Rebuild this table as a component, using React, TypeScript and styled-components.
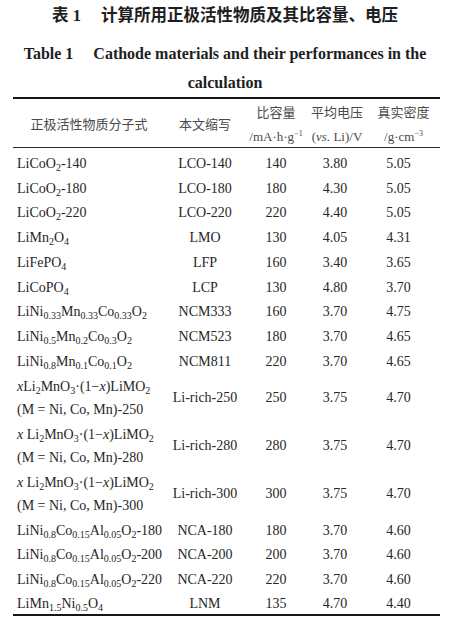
import React from 'react';
import styled, { createGlobalStyle } from 'styled-components';

const GlobalStyle = createGlobalStyle`
  body {
    margin: 0;
    background: #fff;
  }
`;

const Page = styled.div`
  width: 450px;
  color: #262626;
  font-family: "Liberation Serif", "Times New Roman", serif;
`;

const CnTitle = styled.h1`
  margin: 0;
  height: 30px;
  line-height: 31px;
  text-align: center;
  font-family: "Liberation Serif", "Noto Sans CJK SC", sans-serif;
  font-size: 16.5px;
  font-weight: bold;
  color: #1e1e1e;
  white-space: nowrap;
`;

const TitleLabel = styled.span`
  margin-right: 20px;
`;

const EnTitle = styled.h2`
  margin: 8.5px 0 0;
  text-align: center;
  font-size: 16px;
  font-weight: bold;
  line-height: 29px;
  color: #1e1e1e;
`;

const EnLine = styled.div`
  white-space: nowrap;
`;

const Table = styled.div`
  width: 427px;
  margin-left: 13px;
  border-top: 2px solid #151515;
  border-bottom: 2px solid #151515;
`;

const columns = '152px 80px 62px 60px 73px';

const HeadRow = styled.div`
  display: grid;
  grid-template-columns: ${columns};
  align-items: center;
  height: 46px;
  padding-top: 2px;
  border-bottom: 1px solid #2a2a2a;
`;

const HeadCell = styled.div`
  text-align: center;
  font-family: "Liberation Serif", "Noto Sans CJK SC", serif;
  font-size: 13px;
  line-height: 24.5px;
  color: #4a4a4a;
  white-space: nowrap;
`;

const Body = styled.div`
  padding-top: 3.6px;
`;

const Row = styled.div<{ $height: number }>`
  display: grid;
  grid-template-columns: ${columns};
  align-items: center;
  height: ${p => p.$height}px;
`;

const Cell = styled.div<{ $align?: 'left' | 'center'; $padRight?: number }>`
  text-align: ${p => p.$align || 'center'};
  padding-left: ${p => (p.$align === 'left' ? 4 : 0)}px;
  padding-right: ${p => p.$padRight || 0}px;
  font-size: 14px;
  line-height: 23px;
  white-space: nowrap;
`;

const Sub = styled.sub`
  font-size: 10px;
  vertical-align: -3px;
  line-height: 0;
`;

const Sup = styled.sup`
  font-size: 8px;
  vertical-align: 5px;
  line-height: 0;
`;

const Var = styled.i``;

const liRich = (n: number, spaced: boolean) => (
  <>
    <div>
      <Var>x</Var>{spaced ? ' ' : ''}Li<Sub>2</Sub>MnO<Sub>3</Sub>·(1−<Var>x</Var>)LiMO<Sub>2</Sub>
    </div>
    <div>(M = Ni, Co, Mn)-{n}</div>
  </>
);

const nca = (n: number) => (
  <>
    LiNi<Sub>0.8</Sub>Co<Sub>0.15</Sub>Al<Sub>0.05</Sub>O<Sub>2</Sub>-{n}
  </>
);

interface Material {
  formula: React.ReactNode;
  abbr: string;
  capacity: string;
  voltage: string;
  density: string;
  height?: number;
}

const materials: Material[] = [
  { formula: <>LiCoO<Sub>2</Sub>-140</>, abbr: 'LCO-140', capacity: '140', voltage: '3.80', density: '5.05' },
  { formula: <>LiCoO<Sub>2</Sub>-180</>, abbr: 'LCO-180', capacity: '180', voltage: '4.30', density: '5.05' },
  { formula: <>LiCoO<Sub>2</Sub>-220</>, abbr: 'LCO-220', capacity: '220', voltage: '4.40', density: '5.05' },
  { formula: <>LiMn<Sub>2</Sub>O<Sub>4</Sub></>, abbr: 'LMO', capacity: '130', voltage: '4.05', density: '4.31' },
  { formula: <>LiFePO<Sub>4</Sub></>, abbr: 'LFP', capacity: '160', voltage: '3.40', density: '3.65' },
  { formula: <>LiCoPO<Sub>4</Sub></>, abbr: 'LCP', capacity: '130', voltage: '4.80', density: '3.70' },
  {
    formula: <>LiNi<Sub>0.33</Sub>Mn<Sub>0.33</Sub>Co<Sub>0.33</Sub>O<Sub>2</Sub></>,
    abbr: 'NCM333', capacity: '160', voltage: '3.70', density: '4.75',
  },
  {
    formula: <>LiNi<Sub>0.5</Sub>Mn<Sub>0.2</Sub>Co<Sub>0.3</Sub>O<Sub>2</Sub></>,
    abbr: 'NCM523', capacity: '180', voltage: '3.70', density: '4.65',
  },
  {
    formula: <>LiNi<Sub>0.8</Sub>Mn<Sub>0.1</Sub>Co<Sub>0.1</Sub>O<Sub>2</Sub></>,
    abbr: 'NCM811', capacity: '220', voltage: '3.70', density: '4.65',
  },
  { formula: liRich(250, false), abbr: 'Li-rich-250', capacity: '250', voltage: '3.75', density: '4.70', height: 48 },
  { formula: liRich(280, true), abbr: 'Li-rich-280', capacity: '280', voltage: '3.75', density: '4.70', height: 48 },
  { formula: liRich(300, true), abbr: 'Li-rich-300', capacity: '300', voltage: '3.75', density: '4.70', height: 48 },
  { formula: nca(180), abbr: 'NCA-180', capacity: '180', voltage: '3.70', density: '4.60' },
  { formula: nca(200), abbr: 'NCA-200', capacity: '200', voltage: '3.70', density: '4.60' },
  { formula: nca(220), abbr: 'NCA-220', capacity: '220', voltage: '3.70', density: '4.60' },
  { formula: <>LiMn<Sub>1.5</Sub>Ni<Sub>0.5</Sub>O<Sub>4</Sub></>, abbr: 'LNM', capacity: '135', voltage: '4.70', density: '4.40', height: 22 },
];

const App: React.FC = () => {
  return (
    <Page>
      <GlobalStyle />
      <CnTitle>
        <TitleLabel>表 1</TitleLabel>计算所用正极活性物质及其比容量、电压
      </CnTitle>
      <EnTitle>
        <EnLine>
          <TitleLabel>Table 1</TitleLabel>Cathode materials and their performances in the
        </EnLine>
        <EnLine>calculation</EnLine>
      </EnTitle>
      <Table>
        <HeadRow>
          <HeadCell>正极活性物质分子式</HeadCell>
          <HeadCell>本文缩写</HeadCell>
          <HeadCell>
            <div>比容量</div>
            <div>/mA·h·g<Sup>−1</Sup></div>
          </HeadCell>
          <HeadCell>
            <div>平均电压</div>
            <div>(<Var>vs.</Var> Li)/V</div>
          </HeadCell>
          <HeadCell>
            <div>真实密度</div>
            <div>/g·cm<Sup>−3</Sup></div>
          </HeadCell>
        </HeadRow>
        <Body>
          {materials.map(m => (
            <Row key={m.abbr} $height={m.height || 24.75}>
              <Cell $align="left">{m.formula}</Cell>
              <Cell>{m.abbr}</Cell>
              <Cell>{m.capacity}</Cell>
              <Cell $padRight={4}>{m.voltage}</Cell>
              <Cell $padRight={10}>{m.density}</Cell>
            </Row>
          ))}
        </Body>
      </Table>
    </Page>
  );
};

export default App;
